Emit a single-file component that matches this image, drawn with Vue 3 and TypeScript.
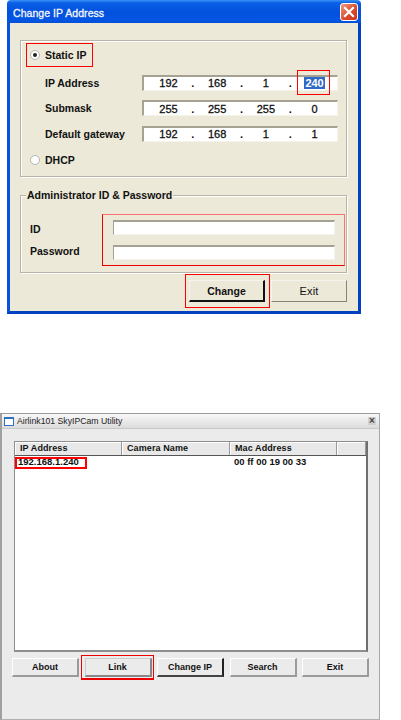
<script setup lang="ts">
const ipRows = [
  { label: 'IP Address', parts: ['192', '168', '1', '240'] },
  { label: 'Submask', parts: ['255', '255', '255', '0'] },
  { label: 'Default gateway', parts: ['192', '168', '1', '1'] },
]
const columns = [
  { name: 'IP Address', width: 107 },
  { name: 'Camera Name', width: 108 },
  { name: 'Mac Address', width: 107 },
  { name: '', width: 29 },
]
const buttons = ['About', 'Link', 'Change IP', 'Search', 'Exit']
</script>

<template>
  <div class="page">
    <section class="xp">
      <header class="xp-title">
        <span class="xp-title-text">Change IP Address</span>
        <span class="close">
          <svg width="14" height="14" viewBox="0 0 14 14"><path d="M3 3l8 8M11 3l-8 8" stroke="#fff" stroke-width="2.2" stroke-linecap="square" /></svg>
        </span>
      </header>
      <div class="xp-body">
        <div class="group group-ip">
          <div class="radio-line static">
            <span class="radio on"><i></i></span>
            <span>Static IP</span>
            <span class="mark mark-static"></span>
          </div>
          <div v-for="row in ipRows" :key="row.label" class="ip-row">
            <label>{{ row.label }}</label>
            <div class="ip-field">
              <template v-for="(part, i) in row.parts" :key="i">
                <span class="octet" :class="{ selected: row.label === 'IP Address' && i === 3 }"><b>{{ part }}</b><span v-if="row.label === 'IP Address' && i === 3" class="mark mark-octet"></span></span>
                <span v-if="i < 3" class="dot">.</span>
              </template>
            </div>
          </div>
          <div class="radio-line dhcp">
            <span class="radio"></span>
            <span>DHCP</span>
          </div>
        </div>

        <div class="group group-admin">
          <span class="legend">Administrator ID &amp; Password</span>
          <div class="admin-row first"><label>ID</label><span class="text-input"></span></div>
          <div class="admin-row second"><label>Password</label><span class="text-input"></span></div>
          <span class="mark mark-admin"></span>
        </div>

        <div class="xp-actions">
          <button class="xp-btn default">Change<span class="mark mark-change"></span></button>
          <button class="xp-btn">Exit</button>
        </div>
      </div>
    </section>

    <section class="util">
      <header class="util-title">
        <span class="app-icon"></span>
        <span>Airlink101 SkyIPCam Utility</span>
        <span class="util-x">×</span>
      </header>
      <div class="list">
        <div class="list-head">
          <span v-for="c in columns" :key="c.name" :style="{ width: c.width + 'px' }">{{ c.name }}</span>
        </div>
        <div class="list-row">
          <span class="cell-ip">192.168.1.240<span class="mark mark-ip"></span></span>
          <span class="cell-mac">00 ff 00 19 00 33</span>
        </div>
      </div>
      <div class="util-actions">
        <button v-for="b in buttons" :key="b" class="util-btn" :class="{ link: b === 'Link', dark: b === 'Change IP' }">
          {{ b }}<span v-if="b === 'Link'" class="mark mark-link"></span>
        </button>
      </div>
    </section>
  </div>
</template>

<style>
html, body { margin: 0; background: #fff; }
</style>

<style scoped>
.page {
  width: 401px;
  height: 720px;
  overflow: hidden;
  background: #fff;
  font-family: "Liberation Sans", Arial, sans-serif;
  color: #111;
}
.mark { position: absolute; border: 1px solid #f00; box-sizing: border-box; pointer-events: none; }

.xp { margin-left: 7px; width: 354px; height: 314px; box-sizing: border-box; display: flex; flex-direction: column; }
.xp-title {
  height: 23px;
  flex: none;
  box-sizing: border-box;
  padding: 0 3px 0 6px;
  display: flex;
  align-items: center;
  justify-content: space-between;
  color: #f4f7ff;
  font-size: 10.5px;
  border-radius: 4px 4px 0 0;
  background: linear-gradient(#3a90f4 0, #0a5fe6 3px, #0351dc 12px, #0455e4 20px, #0350d4 23px);
}
.xp-title-text { -webkit-text-stroke: 0.3px #f4f7ff; letter-spacing: 0.05px; padding-top: 2px; }
.close {
  width: 16px; height: 16px; border: 1px solid #fff; border-radius: 3px;
  background: linear-gradient(135deg, #ee9a7c, #d8482a 60%, #c63a1c);
  display: flex; align-items: center; justify-content: center;
}
.xp-body {
  flex: 1;
  box-sizing: border-box;
  position: relative;
  background: #ece9d8;
  border-left: 3px solid #0a52dc;
  border-right: 3px solid #0340c8;
  border-bottom: 3px solid #0340c0;
  padding: 17px 11px 0 10px;
  font-size: 10.5px;
  font-weight: 700;
}
.group { position: relative; border: 1px solid #b8b5a6; box-shadow: inset 1px 1px 0 #fff, 1px 1px 0 #fff; box-sizing: border-box; }
.group-ip { height: 137px; padding: 0 8px 0 9px; }
.radio-line { display: flex; align-items: center; gap: 5px; position: relative; height: 16px; }
.static { margin: 6px 0 7px; }
.dhcp { margin-top: 5px; }
.radio {
  width: 10px; height: 10px; border-radius: 50%; background: #fff; border: 1px solid #b5b5b5;
  box-sizing: border-box; display: flex; align-items: center; justify-content: center; flex: none;
}
.radio i { width: 4px; height: 4px; border-radius: 50%; background: #222; }
.mark-static { left: -4px; top: -4px; width: 67px; height: 24px; }
.ip-row { display: flex; align-items: center; height: 25.5px; padding-left: 15px; }
.ip-row label { width: 97px; flex: none; }
.ip-field {
  width: 196px;
  height: 16px;
  box-sizing: border-box;
  background: #fff;
  border-top: 2px solid #a5a294;
  border-left: 2px solid #a5a294;
  border-right: 1px solid #f5f4ec;
  border-bottom: 1px solid #f5f4ec;
  padding-left: 3px;
  display: flex;
  align-items: center;
  font-size: 11px;
}
.octet { width: 43px; flex: none; text-align: center; position: relative; font-weight: 700; }
.octet b { padding: 0 1px; font-weight: 400; -webkit-text-stroke: 0.3px #111; }
.octet.selected b { background: #316ac5; color: #fff; -webkit-text-stroke: 0; font-weight: 700; }
.dot { width: 5.7px; flex: none; text-align: center; font-weight: 700; }
.mark-octet { left: 4px; top: -7px; width: 33px; height: 25px; }

.group-admin { height: 78px; margin-top: 18px; padding: 19px 11px 0 9px; }
.legend { position: absolute; left: 5px; top: -7px; background: #ece9d8; padding: 0 1px; line-height: 13px; }
.admin-row { display: flex; align-items: center; height: 25px; }
.admin-row label { width: 83px; flex: none; }
.admin-row.first label { margin-top: 3px; }
.admin-row.second label { margin-bottom: 3px; }
.text-input {
  width: 222px; height: 15px; background: #fff; box-sizing: border-box;
  border-top: 2px solid #a5a294; border-left: 1px solid #a5a294; border-right: 1px solid #f5f4ec; border-bottom: 1px solid #f5f4ec;
}
.mark-admin { left: 81px; top: 18px; width: 243px; height: 52px; border-color: #ff7070 #ff7070 #e00 #e00; }

.xp-actions { display: flex; justify-content: flex-end; gap: 6px; margin-top: 7px; }
.xp-btn {
  position: relative;
  width: 76px;
  height: 22px;
  padding: 0;
  background: #ece9d8;
  border: 1px solid;
  border-color: #f5f4ec #85837a #85837a #f5f4ec;
  font: 400 11px "Liberation Sans", Arial, sans-serif;
  letter-spacing: 0.2px;
  color: #111;
}
.xp-btn.default {
  font-size: 10.5px;
  font-weight: 700;
  letter-spacing: 0;
  border-color: #f5f4ec #111 #111 #f5f4ec;
  border-width: 1px 2px 2px 1px;
}
.mark-change { left: -5px; top: -7px; width: 85px; height: 34px; }

.util {
  margin-top: 99px;
  width: 380px;
  height: 307px;
  box-sizing: border-box;
  background: #ebebeb;
  border-top: 1px solid #9a9a9a;
  border-left: 2px solid #a0a0a0;
  border-right: 1px solid #a8a8a8;
  border-bottom: 1px solid #b0b0b0;
  display: flex;
  flex-direction: column;
  font-size: 9px;
  font-weight: 700;
}
.util-title {
  height: 14px;
  flex: none;
  display: flex;
  align-items: center;
  gap: 3px;
  padding: 0 3px 0 2px;
  font-size: 8.7px;
  font-weight: 400;
  color: #222;
  background: linear-gradient(#f8f8f8, #dcdcdc);
  border-bottom: 1px solid #c8c8c8;
}
.app-icon { width: 8px; height: 6px; border: 1px solid #2f6fc0; border-top-width: 2px; background: #fff; flex: none; }
.util-x {
  margin-left: auto;
  width: 8px; height: 8px;
  background: #d0d0d0;
  text-align: center;
  font-size: 10px;
  font-weight: 700;
  color: #444;
  line-height: 8px;
}
.list {
  margin: 12px 11px 0 12px;
  height: 211px;
  box-sizing: border-box;
  background: #fff;
  border-left: 1px solid #8d8d8d;
  border-top: 1px solid #8d8d8d;
  border-right: 2px solid #6f6f6f;
  border-bottom: 2px solid #8d8d8d;
}
.list-head { display: flex; height: 13px; background: #e8e8e8; border-bottom: 1px solid #555; }
.list-head span {
  box-sizing: border-box;
  padding-left: 5px;
  line-height: 13px;
  border-right: 1px solid #999;
  box-shadow: inset 1px 1px 0 #fff;
  letter-spacing: 0.1px;
}
.list-row { display: flex; height: 12px; line-height: 12px; }
.cell-ip { position: relative; width: 215px; padding-left: 3px; box-sizing: border-box; font-size: 9.5px; }
.mark-ip { left: 0; top: 1px; width: 72px; height: 12px; border-width: 2px; }
.cell-mac { padding-left: 4px; font-size: 9.5px; }
.util-actions { display: flex; gap: 5.5px; padding: 6px 0 0 10px; }
.util-btn {
  position: relative;
  width: 67px;
  height: 19px;
  padding: 0;
  background: #ebebeb;
  border: 1px solid;
  border-width: 1px 2px 2px 1px;
  border-color: #fff #9a9a9a #9a9a9a #fff;
  font: 700 9px "Liberation Sans", Arial, sans-serif;
  color: #111;
}
.util-btn.link { border-color: #ccc #888 #888 #ccc; }
.util-btn.dark { border-color: #fff #222 #444 #fff; }
.mark-link { left: -4.5px; top: -4px; width: 73px; height: 25px; border-width: 1px 1px 2px 1px; border-color: #e00; }
</style>
